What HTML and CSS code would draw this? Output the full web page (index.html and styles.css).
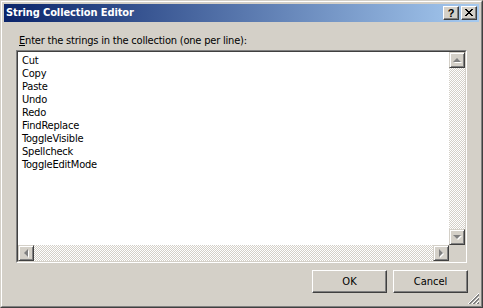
FILE: index.html
```html
<!DOCTYPE html>
<html lang="en">
<head>
  <meta charset="UTF-8">
  <title>String Collection Editor</title>
  <link rel="stylesheet" href="styles.css">
</head>
<body>
  <div class="window">
    <div class="frame">
      <div class="titlebar">
        <span class="title">String Collection Editor</span>
        <div class="caption-buttons">
          <button class="caption-btn help">?</button>
          <button class="caption-btn close">
            <svg width="8" height="7" viewBox="0 0 8 7">
              <path d="M0 0h2v1h1v1h2v-1h1v-1h2v1h-1v1h-1v1h-1v1h1v1h1v1h1v1h-2v-1h-1v-1h-2v1h-1v1h-2v-1h1v-1h1v-1h1v-1h-1v-1h-1v-1h-1z" fill="#000"/>
            </svg>
          </button>
        </div>
      </div>

      <div class="client">
        <div class="prompt"><u>E</u>nter the strings in the collection (one per line):</div>

        <div class="editbox">
          <div class="edit-inner">
            <div class="lines">
              <div>Cut</div>
              <div>Copy</div>
              <div>Paste</div>
              <div>Undo</div>
              <div>Redo</div>
              <div>FindReplace</div>
              <div>ToggleVisible</div>
              <div>Spellcheck</div>
              <div>ToggleEditMode</div>
            </div>
            <div class="vscroll">
              <div class="sb-btn"><span class="arrow up"></span></div>
              <div class="sb-track"></div>
              <div class="sb-btn"><span class="arrow down"></span></div>
            </div>
            <div class="hscroll">
              <div class="sb-btn"><span class="arrow left"></span></div>
              <div class="sb-track"></div>
              <div class="sb-btn"><span class="arrow right"></span></div>
            </div>
            <div class="sb-corner"></div>
          </div>
        </div>

        <div class="actions">
          <button class="push-btn">OK</button>
          <button class="push-btn">Cancel</button>
        </div>
      </div>

      <svg class="grip" width="12" height="12" viewBox="0 0 12 12">
        <path d="M11 0L0 11M11 4L4 11M11 8L8 11" stroke="#fff" stroke-width="1"/>
        <path d="M11 1L1 11M11 2L2 11M11 5L5 11M11 6L6 11M11 9L9 11M11 10L10 11" stroke="#808080" stroke-width="1"/>
      </svg>
    </div>
  </div>
</body>
</html>
```

FILE: styles.css
```css
body {
  margin: 0;
  padding: 0;
  background-color: #d4d0c8;
  font-family: "DejaVu Sans Condensed", "Liberation Sans", sans-serif;
  font-size: 11px;
}
.window {
  position: relative;
  width: 483px;
  height: 308px;
  box-sizing: border-box;
  border: 1px solid;
  border-color: #d4d0c8 #404040 #404040 #d4d0c8;
  background-color: #d4d0c8;
}
.frame {
  height: 100%;
  box-sizing: border-box;
  border: 1px solid;
  border-color: #fff #808080 #808080 #fff;
  padding: 2px;
  display: flex;
  flex-direction: column;
}
.titlebar {
  height: 18px;
  display: flex;
  align-items: flex-start;
  justify-content: space-between;
  background: linear-gradient(to right, #0a246a, #a6caf0);
}
.title {
  color: #fff;
  font-weight: bold;
  line-height: 18px;
  padding-left: 2px;
  letter-spacing: -0.1px;
}
.caption-buttons {
  display: flex;
  gap: 2px;
  margin-top: 2px;
  margin-right: 2px;
}
.caption-btn {
  width: 16px;
  height: 14px;
  padding: 0;
  margin: 0;
  box-sizing: border-box;
  background-color: #d4d0c8;
  border: 1px solid;
  border-color: #fff #404040 #404040 #fff;
  box-shadow: inset -1px -1px 0 #808080;
  display: flex;
  align-items: center;
  justify-content: center;
  font-family: "Liberation Sans", sans-serif;
  font-weight: bold;
  font-size: 11px;
  line-height: 12px;
  color: #000;
}
.caption-btn svg {
  display: block;
  margin-top: -1px;
}
.client {
  flex: 1;
  padding: 12px 11px 0 12px;
  display: flex;
  flex-direction: column;
  letter-spacing: -0.2px;
}
.prompt {
  line-height: 13px;
  padding-left: 3px;
  margin-bottom: 3px;
}
.editbox {
  width: 451px;
  height: 213px;
  box-sizing: border-box;
  border: 1px solid;
  border-color: #808080 #fff #fff #808080;
}
.edit-inner {
  height: 100%;
  box-sizing: border-box;
  border: 1px solid;
  border-color: #404040 #d4d0c8 #d4d0c8 #404040;
  background-color: #fff;
  display: grid;
  grid-template-columns: 1fr 16px;
  grid-template-rows: 1fr 16px;
}
.lines {
  padding: 2px 0 0 4px;
  line-height: 13px;
}
.vscroll {
  display: flex;
  flex-direction: column;
}
.hscroll {
  display: flex;
}
.sb-track {
  flex: 1;
  background: repeating-conic-gradient(#fff 0 25%, #d4d0c8 0 50%) 0 0 / 2px 2px;
}
.sb-btn {
  width: 16px;
  height: 16px;
  box-sizing: border-box;
  background-color: #d4d0c8;
  border: 1px solid;
  border-color: #d4d0c8 #404040 #404040 #d4d0c8;
  box-shadow: inset 1px 1px 0 #fff, inset -1px -1px 0 #808080;
  display: flex;
  align-items: center;
  justify-content: center;
}
.sb-corner {
  background-color: #d4d0c8;
}
.arrow {
  width: 0;
  height: 0;
  border: 4px solid transparent;
  filter: drop-shadow(1px 1px 0 #fff);
}
.arrow.up {
  border-bottom-color: #808080;
  border-top-width: 0;
}
.arrow.down {
  border-top-color: #808080;
  border-bottom-width: 0;
}
.arrow.left {
  border-right-color: #808080;
  border-left-width: 0;
}
.arrow.right {
  border-left-color: #808080;
  border-right-width: 0;
}
.actions {
  display: flex;
  justify-content: flex-end;
  gap: 6px;
  margin-top: 7px;
}
.push-btn {
  width: 75px;
  height: 23px;
  margin: 0;
  padding: 0;
  box-sizing: border-box;
  background-color: #d4d0c8;
  border: 1px solid;
  border-color: #fff #404040 #404040 #fff;
  box-shadow: inset -1px -1px 0 #808080;
  font-family: inherit;
  font-size: 11px;
  color: #000;
}
.grip {
  position: absolute;
  right: 2px;
  bottom: 2px;
}
```
